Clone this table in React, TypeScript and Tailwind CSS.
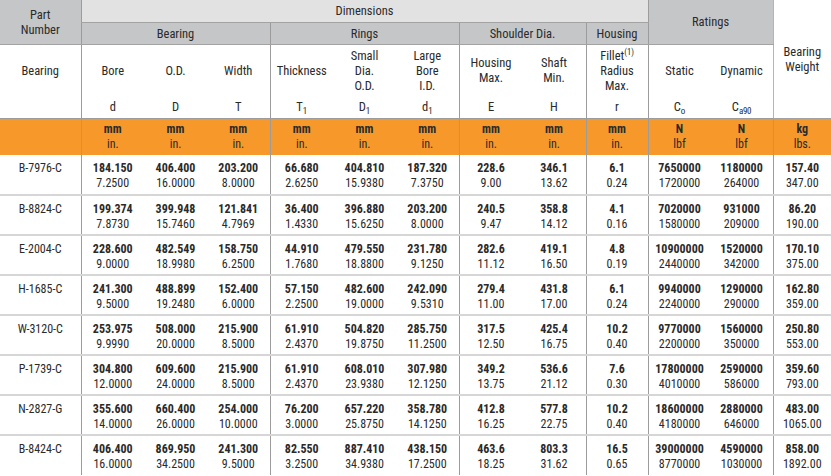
type Pair = [string, string];
type Row = { part: string; vals: Pair[] };

const rows: Row[] = [
  { part: "B-7976-C", vals: [["184.150", "7.2500"], ["406.400", "16.0000"], ["203.200", "8.0000"], ["66.680", "2.6250"], ["404.810", "15.9380"], ["187.320", "7.3750"], ["228.6", "9.00"], ["346.1", "13.62"], ["6.1", "0.24"], ["7650000", "1720000"], ["1180000", "264000"], ["157.40", "347.00"]] },
  { part: "B-8824-C", vals: [["199.374", "7.8730"], ["399.948", "15.7460"], ["121.841", "4.7969"], ["36.400", "1.4330"], ["396.880", "15.6250"], ["203.200", "8.0000"], ["240.5", "9.47"], ["358.8", "14.12"], ["4.1", "0.16"], ["7020000", "1580000"], ["931000", "209000"], ["86.20", "190.00"]] },
  { part: "E-2004-C", vals: [["228.600", "9.0000"], ["482.549", "18.9980"], ["158.750", "6.2500"], ["44.910", "1.7680"], ["479.550", "18.8800"], ["231.780", "9.1250"], ["282.6", "11.12"], ["419.1", "16.50"], ["4.8", "0.19"], ["10900000", "2440000"], ["1520000", "342000"], ["170.10", "375.00"]] },
  { part: "H-1685-C", vals: [["241.300", "9.5000"], ["488.899", "19.2480"], ["152.400", "6.0000"], ["57.150", "2.2500"], ["482.600", "19.0000"], ["242.090", "9.5310"], ["279.4", "11.00"], ["431.8", "17.00"], ["6.1", "0.24"], ["9940000", "2240000"], ["1290000", "290000"], ["162.80", "359.00"]] },
  { part: "W-3120-C", vals: [["253.975", "9.9990"], ["508.000", "20.0000"], ["215.900", "8.5000"], ["61.910", "2.4370"], ["504.820", "19.8750"], ["285.750", "11.2500"], ["317.5", "12.50"], ["425.4", "16.75"], ["10.2", "0.40"], ["9770000", "2200000"], ["1560000", "350000"], ["250.80", "553.00"]] },
  { part: "P-1739-C", vals: [["304.800", "12.0000"], ["609.600", "24.0000"], ["215.900", "8.5000"], ["61.910", "2.4370"], ["608.010", "23.9380"], ["307.980", "12.1250"], ["349.2", "13.75"], ["536.6", "21.12"], ["7.6", "0.30"], ["17800000", "4010000"], ["2590000", "586000"], ["359.60", "793.00"]] },
  { part: "N-2827-G", vals: [["355.600", "14.0000"], ["660.400", "26.0000"], ["254.000", "10.0000"], ["76.200", "3.0000"], ["657.220", "25.8750"], ["358.780", "14.1250"], ["412.8", "16.25"], ["577.8", "22.75"], ["10.2", "0.40"], ["18600000", "4180000"], ["2880000", "646000"], ["483.00", "1065.00"]] },
  { part: "B-8424-C", vals: [["406.400", "16.0000"], ["869.950", "34.2500"], ["241.300", "9.5000"], ["82.550", "3.2500"], ["887.410", "34.9380"], ["438.150", "17.2500"], ["463.6", "18.25"], ["803.3", "31.62"], ["16.5", "0.65"], ["39000000", "8770000"], ["4590000", "1030000"], ["858.00", "1892.00"]] },
];

// columns that start a group get the vertical rule
const groupStart = [false, true, false, false, true, false, false, true, false, true, true, false, true];
const widths = ["w-[81px]", "w-[63px]", "w-[63px]", "w-[63px]", "w-[63px]", "w-[63px]", "w-[63px]", "w-[63.5px]", "w-[63.5px]", "w-[62px]", "w-[62.5px]", "w-[62.5px]", "w-[58px]"];

const units: Pair[] = [
  ["mm", "in."], ["mm", "in."], ["mm", "in."], ["mm", "in."], ["mm", "in."], ["mm", "in."],
  ["mm", "in."], ["mm", "in."], ["mm", "in."], ["N", "lbf"], ["N", "lbf"], ["kg", "lbs."],
];

const rule = "border-l border-l-[#9c9c9c]";

export default function App() {
  return (
    <div className="w-[831px] h-[476px] overflow-hidden bg-white text-[#2a2a2a] font-['Roboto_Condensed','Liberation_Sans',sans-serif] text-[12.5px] leading-[15px]">
      <table className="table-fixed border-collapse w-[831px] text-center">
        <colgroup>
          {widths.map((w, i) => (
            <col key={i} className={w} />
          ))}
        </colgroup>
        <thead>
          {/* top bands */}
          <tr className="h-[22px]">
            <th rowSpan={2} className="font-normal bg-[#c5c6c8] border-b border-b-[#a3a3a3] align-middle pt-px">
              Part
              <br />
              Number
            </th>
            <th colSpan={9} className={`font-normal bg-[#e2e2e2] border-b border-b-[#a3a3a3] ${rule}`}>
              Dimensions
            </th>
            <th colSpan={2} rowSpan={2} className={`font-normal bg-[#c5c6c8] border-b border-b-[#a3a3a3] ${rule}`}>
              Ratings
            </th>
            <th rowSpan={4} className="font-normal bg-white border-b border-b-[#a3a3a3] border-l border-l-[#b5b5b5] align-middle">
              Bearing
              <br />
              Weight
            </th>
          </tr>
          <tr className="h-[22px]">
            <th colSpan={3} className={`font-normal bg-[#c5c6c8] border-b border-b-[#a3a3a3] ${rule}`}>Bearing</th>
            <th colSpan={3} className={`font-normal bg-[#c5c6c8] border-b border-b-[#a3a3a3] ${rule}`}>Rings</th>
            <th colSpan={2} className={`font-normal bg-[#c5c6c8] border-b border-b-[#a3a3a3] ${rule}`}>Shoulder Dia.</th>
            <th className={`font-normal bg-[#c5c6c8] border-b border-b-[#a3a3a3] ${rule}`}>Housing</th>
          </tr>
          {/* labels */}
          <tr className="h-[52px]">
            <th className="font-normal">Bearing</th>
            <th className={`font-normal ${rule}`}>Bore</th>
            <th className="font-normal">O.D.</th>
            <th className="font-normal">Width</th>
            <th className={`font-normal ${rule}`}>Thickness</th>
            <th className="font-normal">
              Small
              <br />
              Dia.
              <br />
              O.D.
            </th>
            <th className="font-normal">
              Large
              <br />
              Bore
              <br />
              I.D.
            </th>
            <th className={`font-normal ${rule}`}>
              Housing
              <br />
              Max.
            </th>
            <th className="font-normal">
              Shaft
              <br />
              Min.
            </th>
            <th className={`font-normal ${rule}`}>
              Fillet<sup className="text-[8.5px] -top-[5px]">(1)</sup>
              <br />
              Radius
              <br />
              Max.
            </th>
            <th className={`font-normal ${rule}`}>Static</th>
            <th className="font-normal">Dynamic</th>
          </tr>
          {/* symbols */}
          <tr className="h-[22px] border-b border-b-[#9c9c9c]">
            <th className="font-normal" />
            <th className={`font-normal ${rule}`}>d</th>
            <th className="font-normal">D</th>
            <th className="font-normal">T</th>
            <th className={`font-normal ${rule}`}>
              T<sub className="text-[9px]">1</sub>
            </th>
            <th className="font-normal">
              D<sub className="text-[9px]">1</sub>
            </th>
            <th className="font-normal">
              d<sub className="text-[9px]">1</sub>
            </th>
            <th className={`font-normal ${rule}`}>E</th>
            <th className="font-normal">H</th>
            <th className={`font-normal ${rule}`}>r</th>
            <th className={`font-normal ${rule}`}>
              C<sub className="text-[9px]">o</sub>
            </th>
            <th className="font-normal">
              C<sub className="text-[9px] tracking-[-0.3px]">a90</sub>
            </th>
          </tr>
          {/* units */}
          <tr className="h-[37px] bg-[#f7982a]">
            {Array.from({ length: 13 }).map((_, i) => {
              const u = i === 0 ? null : units[i - 1];
              return (
                <th key={i} className={`font-normal text-[12px] leading-[15px] ${groupStart[i] ? rule : ""}`}>
                  {u && (
                    <>
                      <div className="font-bold">{u[0]}</div>
                      <div>{u[1]}</div>
                    </>
                  )}
                </th>
              );
            })}
          </tr>
        </thead>
        <tbody>
          {rows.map((r, ri) => (
            <tr key={r.part} className={`h-[40px] ${ri > 0 ? "border-t-2 border-t-[#d6d6d6]" : ""}`}>
              <td className="align-top pt-[6px] text-[12px]">{r.part}</td>
              {r.vals.map((v, vi) => (
                <td key={vi} className={`align-top pt-[6px] text-[12px] ${groupStart[vi + 1] ? rule : ""}`}>
                  <div className="font-bold">{v[0]}</div>
                  <div>{v[1]}</div>
                </td>
              ))}
            </tr>
          ))}
        </tbody>
      </table>
    </div>
  );
}
